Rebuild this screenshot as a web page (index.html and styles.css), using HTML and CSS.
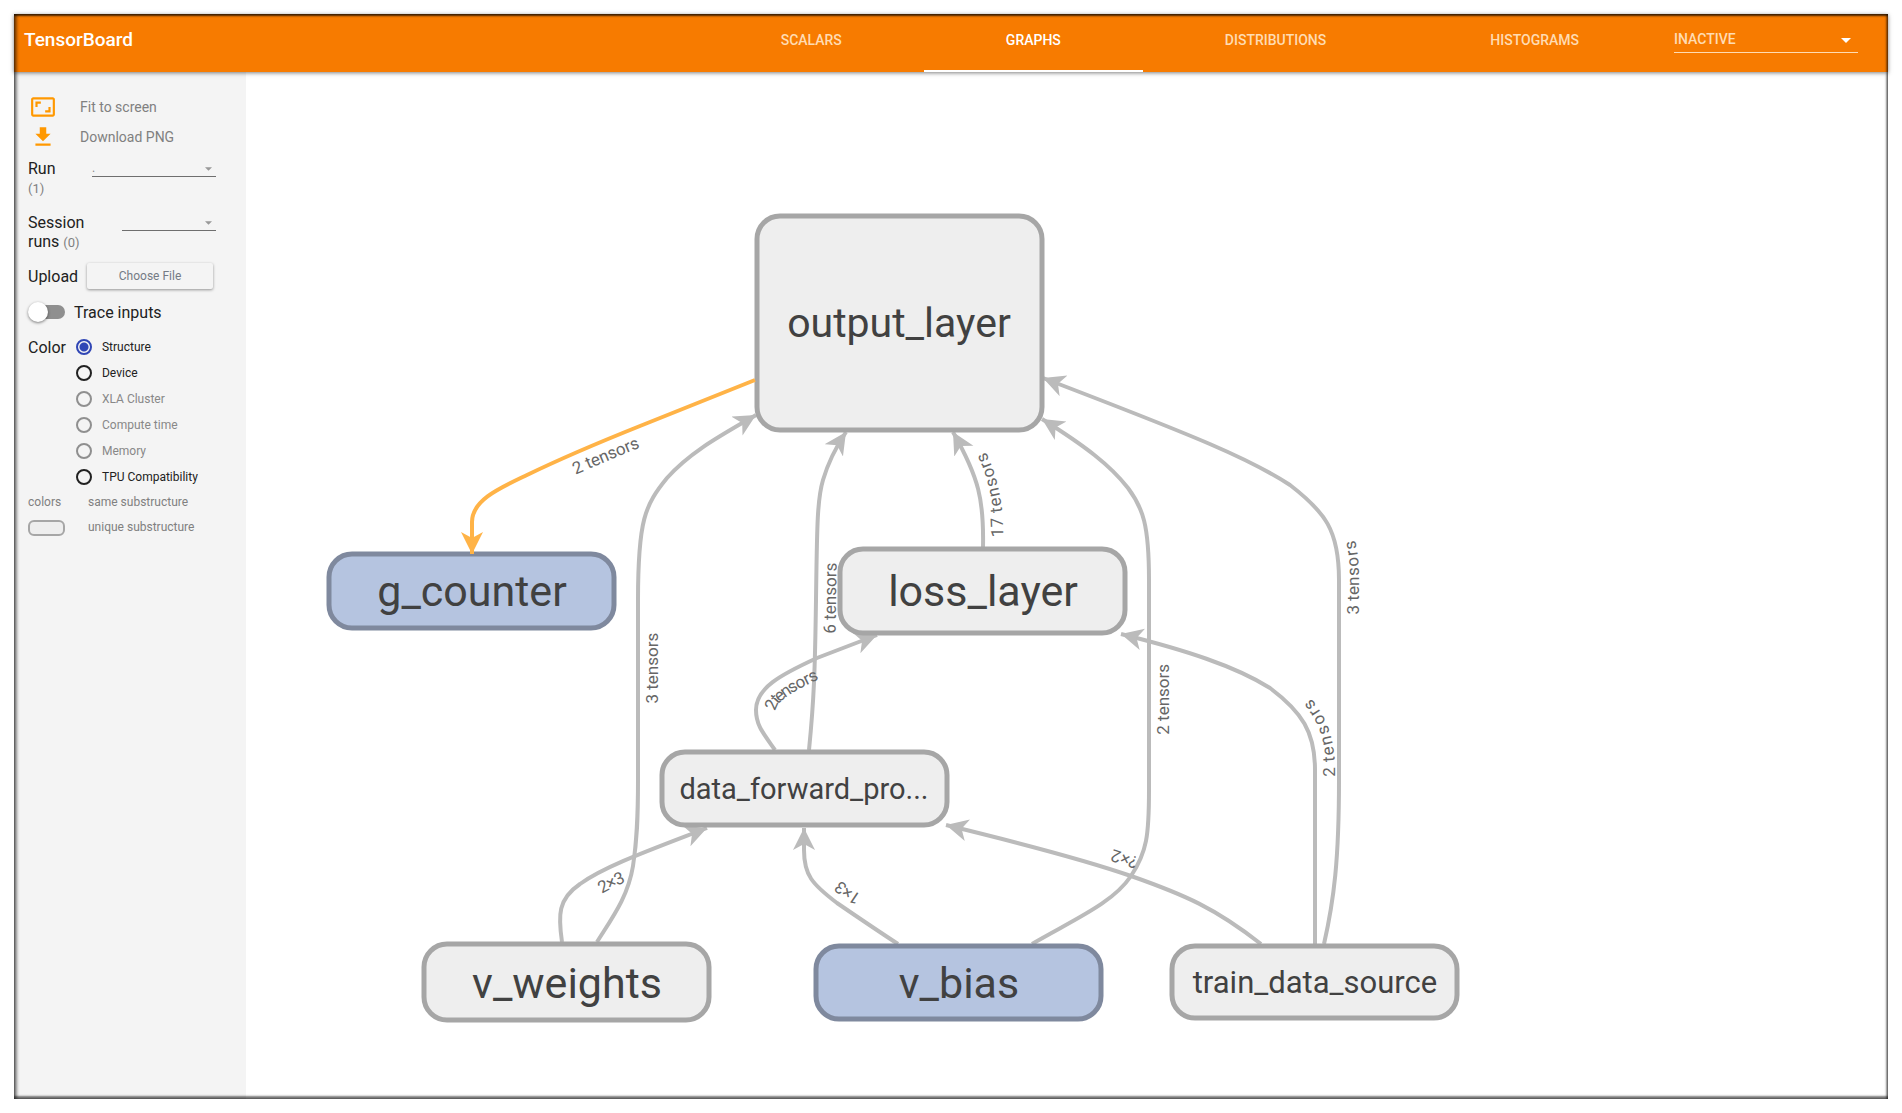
FILE: index.html
```html
<!DOCTYPE html>
<html lang="en">
<head>
<meta charset="utf-8">
<title>TensorBoard</title>
<link rel="stylesheet" href="styles.css">
</head>
<body>
<div class="app">
  <header class="toolbar">
    <h1 class="brand">TensorBoard</h1>
    <nav class="tabs">
      <a class="tab" href="#scalars">SCALARS</a>
      <a class="tab tab-active" href="#graphs" aria-current="page">GRAPHS</a>
      <a class="tab" href="#distributions">DISTRIBUTIONS</a>
      <a class="tab" href="#histograms">HISTOGRAMS</a>
    </nav>
    <div class="picker picker-light">
      <select aria-label="Inactive dashboards"><option>INACTIVE</option></select>
      <svg class="caret" viewBox="0 0 10 5" aria-hidden="true"><path d="M0 0h10L5 5z"/></svg>
    </div>
  </header>

  <div class="content">
    <aside class="sidebar">
      <button class="action" type="button">
        <svg class="action-icon" viewBox="0 0 24 24" aria-hidden="true"><path d="M19 12h-2v3h-3v2h5v-5zM7 9h3V7H5v5h2V9zm14-6H3c-1.100 0-2 .9-2 2v14c0 1.100.9 2 2 2h18c1.100 0 2-.9 2-2V5c0-1.100-.9-2-2-2zm0 16H3V5h18v14z"/></svg>
        Fit to screen
      </button>
      <button class="action" type="button">
        <svg class="action-icon" viewBox="0 0 24 24" aria-hidden="true"><path d="M19 9h-4V3H9v6H5l7 7 7-7zM5 18v2h14v-2H5z"/></svg>
        Download PNG
      </button>

      <div class="field">
        <label class="field-label" for="run">Run <span class="count">(1)</span></label>
        <div class="picker">
          <select id="run"><option>.</option></select>
          <svg class="caret" viewBox="0 0 10 5" aria-hidden="true"><path d="M0 0h10L5 5z"/></svg>
        </div>
      </div>
      <div class="field field-wide">
        <label class="field-label" for="session">Session runs <span class="count">(0)</span></label>
        <div class="picker">
          <select id="session"><option></option></select>
          <svg class="caret" viewBox="0 0 10 5" aria-hidden="true"><path d="M0 0h10L5 5z"/></svg>
        </div>
      </div>

      <div class="upload">
        <span id="upload-label">Upload</span>
        <button class="choose" type="button">Choose File</button>
      </div>

      <label class="trace"><input class="toggle" type="checkbox"> Trace inputs</label>

      <div class="color" role="radiogroup" aria-labelledby="color-label">
        <span class="color-label" id="color-label">Color</span>
        <div class="options">
          <label class="option"><input type="radio" name="color" checked> Structure</label>
          <label class="option"><input type="radio" name="color"> Device</label>
          <label class="option option-off"><input type="radio" name="color" disabled> XLA Cluster</label>
          <label class="option option-off"><input type="radio" name="color" disabled> Compute time</label>
          <label class="option option-off"><input type="radio" name="color" disabled> Memory</label>
          <label class="option"><input type="radio" name="color"> TPU Compatibility</label>
        </div>
      </div>

      <div class="legend">
        <span>colors</span><span>same substructure</span>
        <span class="swatch"></span><span>unique substructure</span>
      </div>
    </aside>

    <main class="canvas">
      <svg class="graph" viewBox="246 72 1642 1027" role="img" aria-label="Model graph">
        <defs>
          <marker id="arrow" markerUnits="userSpaceOnUse" markerWidth="24" markerHeight="24" refX="22" refY="11" orient="auto"><path fill="#bbb" d="M0 0L22 11L0 22L6 11z"/></marker>
          <marker id="arrow-ref" markerUnits="userSpaceOnUse" markerWidth="24" markerHeight="24" refX="22" refY="11" orient="auto-start-reverse"><path fill="#ffb347" d="M0 0L22 11L0 22L6 11z"/></marker>
        </defs>

        <g class="edges">
          <path id="e-weights-output" class="edge" d="M597 942C612 918 628 897 633 866C637 840 638 820 638 780V600C638 520 645 505 667 478C690 452 720 436 756 415"/>
          <path id="e-weights-forward" class="edge" d="M562 942C558 915 558 899 580 884C605 866 650 850 707 828"/>
          <path id="e-bias-forward" class="edge" d="M898 944C875 929 856 916 837 903C812 884 804 875 804 850V828"/>
          <path id="e-bias-output" class="edge" d="M1032 944C1075 919 1113 903 1131 876C1147 852 1149 835 1149 790V580C1149 525 1143 508 1128 488C1110 465 1085 446 1042 419"/>
          <path id="e-forward-output" class="edge" d="M809 750C814 700 815 670 816 600C817 530 817 500 823 480C828 463 836 447 846 432"/>
          <path id="e-loss-output" class="edge" d="M983 547C984 500 979 478 953 432"/>
          <path id="e-forward-loss" class="edge" d="M775 750C763 733 756 725 756 710C756 688 780 675 817 658L877 635"/>
          <path id="e-train-loss" class="edge" d="M1315 944V770C1315 732 1302 712 1270 688C1235 666 1185 650 1121 634"/>
          <path id="e-train-output" class="edge" d="M1324 944C1334 900 1339 860 1339 780V580C1339 530 1325 512 1290 485C1250 459 1200 438 1043 378"/>
          <path id="e-train-forward" class="edge" d="M1261 944C1215 908 1185 895 1131 876C1085 860 1020 843 946 825"/>
        </g>

        <g class="edge-labels">
          <text dy="20"><textPath href="#e-weights-output" startOffset="48%">3 tensors</textPath></text>
          <text dy="20"><textPath href="#e-weights-forward" startOffset="46%">2×3</textPath></text>
          <text dy="20"><textPath href="#e-bias-forward" startOffset="44%">1×3</textPath></text>
          <text dy="20"><textPath href="#e-bias-output" startOffset="48%">2 tensors</textPath></text>
          <text dy="20"><textPath href="#e-forward-output" startOffset="47%">6 tensors</textPath></text>
          <text dy="20"><textPath href="#e-loss-output" startOffset="41%">17 tensors</textPath></text>
          <text dy="20"><textPath href="#e-forward-loss" startOffset="45%">2 tensors</textPath></text>
          <text dy="20"><textPath href="#e-train-loss" startOffset="47%">2 tensors</textPath></text>
          <text dy="20"><textPath href="#e-train-output" startOffset="49%">3 tensors</textPath></text>
          <text dy="20"><textPath href="#e-train-forward" startOffset="47%">?×2</textPath></text>
        </g>

        <g class="nodes">
          <rect class="node" x="757" y="216" width="285" height="214" rx="23"/>
          <text class="name name-medium" x="899" y="337">output_layer</text>
          <rect class="node node-shared" x="329" y="554" width="285" height="74" rx="23"/>
          <text class="name" x="472" y="606">g_counter</text>
          <rect class="node" x="840" y="549" width="285" height="84" rx="23"/>
          <text class="name" x="983" y="606">loss_layer</text>
          <rect class="node" x="662" y="752" width="285" height="73" rx="23"/>
          <text class="name name-small" x="804" y="799">data_forward_pro...</text>
          <rect class="node" x="424" y="944" width="285" height="76" rx="23"/>
          <text class="name" x="567" y="998">v_weights</text>
          <rect class="node node-shared" x="816" y="946" width="285" height="73" rx="23"/>
          <text class="name" x="959" y="998">v_bias</text>
          <rect class="node" x="1172" y="946" width="285" height="72" rx="23"/>
          <text class="name name-source" x="1315" y="993">train_data_source</text>
        </g>

        <path id="e-counter-output" class="edge edge-ref" d="M472 554V522C472 500 500 488 527 475C560 459 600 442 640 426L755 380"/>
        <text class="edge-labels" dy="20"><textPath href="#e-counter-output" startOffset="53%">2 tensors</textPath></text>
      </svg>
    </main>
  </div>
</div>
</body>
</html>
```
FILE: styles.css
```css
* { box-sizing: border-box; }

body {
  margin: 0;
  padding: 14px;
  background: #fff;
  color: #212121;
  font-family: Roboto, "Noto Sans", sans-serif;
  font-size: 16px;
  line-height: 19px;
}

button, select, input { font: inherit; color: inherit; margin: 0; }

.app { position: relative; display: flex; flex-direction: column; }

/* bevelled frame over the whole window */
.app::after {
  content: "";
  position: absolute;
  inset: 0;
  pointer-events: none;
  box-shadow: inset 0 2px 2px rgba(0, 0, 0, .65), inset 0 -3px 2px rgba(0, 0, 0, .5),
    inset 3px 0 3px rgba(0, 0, 0, .45), inset -2px 0 2px rgba(0, 0, 0, .4);
}

/* toolbar */
.toolbar {
  position: relative;
  display: flex;
  align-items: center;
  height: 58px;
  padding: 0 30px 0 10px;
  background: #f77b00;
  color: #fff;
  box-shadow: 0 1px 4px rgba(0, 0, 0, .5);
}
.brand { margin: 0; font-size: 19px; font-weight: 500; line-height: 24px; padding-bottom: 6px; }
.tabs { display: flex; align-self: stretch; margin-left: auto; }
.tab {
  display: flex;
  align-items: center;
  padding: 0 82px 3px;
  border-bottom: 2px solid transparent;
  color: #ffdcb3;
  font-size: 14px;
  font-weight: 500;
  text-decoration: none;
}
.tab-active { color: #fff; border-color: #fff; }

/* underlined drop-downs */
.picker { position: relative; flex: 1; }
.picker select {
  appearance: none;
  display: block;
  width: 100%;
  height: 18px;
  padding: 0;
  border: 0;
  border-bottom: 1px solid #6e6e6e;
  border-radius: 0;
  background: transparent;
  color: #888;
  font-size: 12px;
}
.caret { position: absolute; right: 4px; top: 8px; width: 7px; height: 4px; fill: #999; pointer-events: none; }
.picker-light { flex: none; width: 184px; margin-left: 13px; padding-bottom: 6px; }
.picker-light select { height: 26px; border-color: #ffdcb3; color: #ffdcb3; font-size: 14px; font-weight: 500; }
.picker-light .caret { right: 7px; top: 11px; width: 10px; height: 5px; fill: #fff; }

/* sidebar */
.content { display: flex; flex: 1; }
.sidebar { flex: none; width: 232px; padding: 20px 30px 0 14px; background: #f4f4f4; }
.action {
  display: flex;
  align-items: center;
  gap: 24px;
  width: 100%;
  height: 30px;
  padding: 0 0 0 2px;
  border: 0;
  background: none;
  color: #808080;
  font-size: 14px;
}
.action-icon { width: 26px; height: 26px; fill: #ff9800; }
.field { display: flex; margin-top: 16px; }
.action + .field { margin-top: 7px; }
.field-label { width: 64px; padding-right: 24px; }
.field-wide .field-label { width: 94px; }
.count { color: #808080; font-size: 13px; line-height: 1; }
.upload { display: flex; align-items: center; gap: 9px; margin-top: 12px; }
.choose {
  flex: 1;
  height: 26px;
  margin-right: 3px;
  border: 0;
  border-radius: 2px;
  background: #f4f4f4;
  color: #757b85;
  font-size: 12px;
  box-shadow: 0 1px 3px rgba(0, 0, 0, .4);
}
.trace { display: flex; align-items: center; gap: 9px; height: 22px; margin-top: 12px; }
.toggle { appearance: none; position: relative; width: 37px; height: 20px; }
.toggle::before {
  content: "";
  position: absolute;
  inset: 3px 0 3px 4px;
  border-radius: 7px;
  background: #8f8f8f;
}
.toggle::after {
  content: "";
  position: absolute;
  left: 0;
  width: 20px;
  height: 20px;
  border-radius: 50%;
  background: #fff;
  box-shadow: 0 1px 3px rgba(0, 0, 0, .5);
}
.color { display: flex; gap: 10px; margin-top: 11px; }
.color-label { padding-top: 4px; }
.option { display: flex; align-items: center; gap: 10px; height: 26px; font-size: 12px; }
.option input {
  appearance: none;
  width: 16px;
  height: 16px;
  border: 2px solid #212121;
  border-radius: 50%;
}
.option input:checked { border-color: #3046b5; background: radial-gradient(circle, #3046b5 4px, transparent 5px); }
.option-off { color: #888; }
.option-off input { border-color: #8f8f8f; }
.legend {
  display: grid;
  grid-template-columns: 37px 1fr;
  grid-auto-rows: 25px;
  column-gap: 23px;
  align-items: center;
  color: #808080;
  font-size: 12px;
}
.swatch { height: 16px; border: 2px solid #a6a6a6; border-radius: 6px; background: #eee; }

/* graph */
.canvas { flex: 1; min-width: 0; }
.graph { display: block; width: 100%; height: auto; }
.edge { fill: none; stroke: #bbb; stroke-width: 4; marker-end: url(#arrow); }
.edge-ref { stroke: #ffb347; marker-start: url(#arrow-ref); marker-end: none; }
.edge-labels { fill: #666; font-size: 17px; text-anchor: middle; }
.node { fill: #eee; stroke: #a6a6a6; stroke-width: 5; }
.node-shared { fill: #b5c4e0; stroke: #7f899e; }
.name { fill: #414141; font-size: 43px; text-anchor: middle; }
.name-medium { font-size: 41px; }
.name-source { font-size: 31px; }
.name-small { font-size: 29px; }
```
